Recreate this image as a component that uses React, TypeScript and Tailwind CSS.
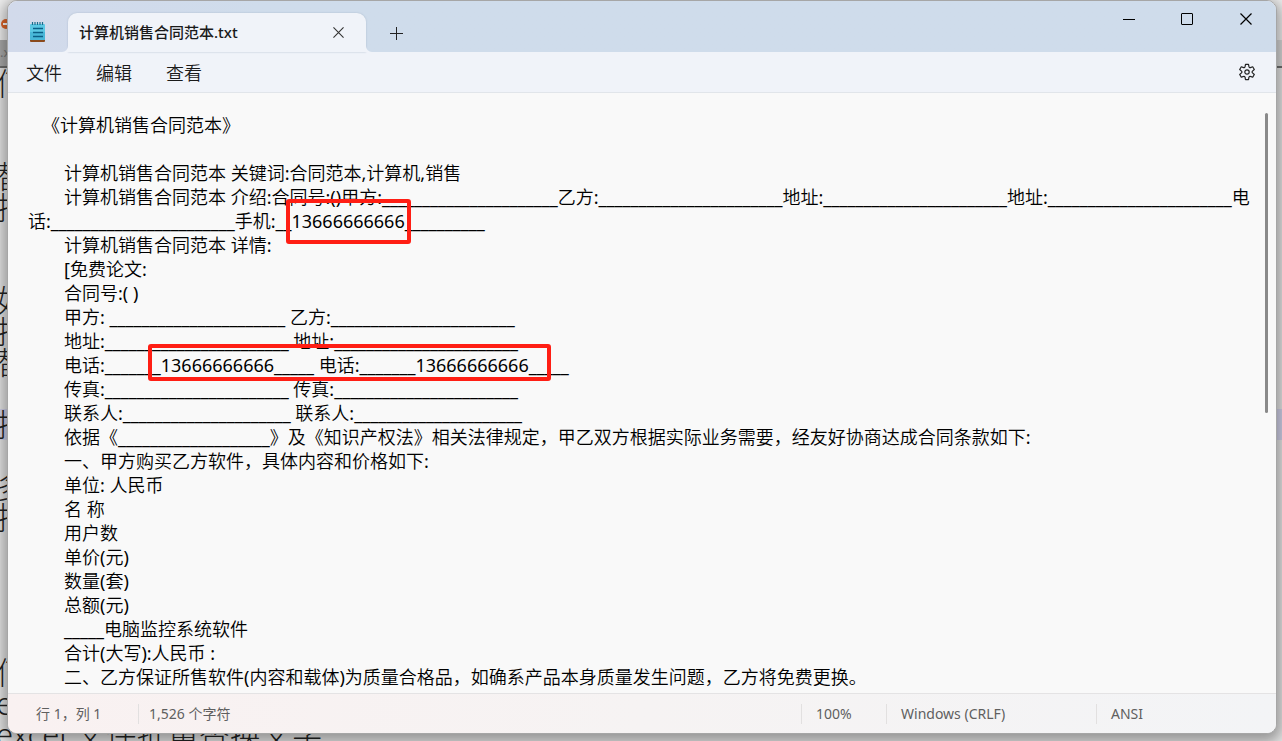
import React, { useState } from 'react';

const blank = (count: number) => '_'.repeat(count);

const DOCUMENT_TEXT = [
  '   《计算机销售合同范本》',
  '',
  '　　计算机销售合同范本 关键词:合同范本,计算机,销售',
  `　　计算机销售合同范本 介绍:合同号:()甲方:${blank(22)}乙方:${blank(23)}地址:${blank(23)}地址:${blank(23)}电话:${blank(23)}手机:${blank(2)}13666666666${blank(10)}`,
  '　　计算机销售合同范本 详情:',
  '　　[免费论文:',
  '　　合同号:( )',
  `　　甲方: ${blank(22)} 乙方:${blank(23)}`,
  `　　地址:${blank(23)} 地址:${blank(23)}`,
  `　　电话:${blank(7)}13666666666${blank(5)} 电话:${blank(7)}13666666666${blank(5)}`,
  `　　传真:${blank(23)} 传真:${blank(23)}`,
  `　　联系人:${blank(21)} 联系人:${blank(21)}`,
  `　　依据《${blank(19)}》及《知识产权法》相关法律规定，甲乙双方根据实际业务需要，经友好协商达成合同条款如下:`,
  '　　一、甲方购买乙方软件，具体内容和价格如下:',
  '　　单位: 人民币',
  '　　名 称',
  '　　用户数',
  '　　单价(元)',
  '　　数量(套)',
  '　　总额(元)',
  `　　${blank(5)}电脑监控系统软件`,
  '　　合计(大写):人民币 :',
  '　　二、乙方保证所售软件(内容和载体)为质量合格品，如确系产品本身质量发生问题，乙方将免费更换。',
].join('\n');

// Lines of the document that is open behind the window
const BACK_LINES = [
  '何', '', '', '替', '找', '', '', '如', '找', '替', '', '找', '', '多', '找',
  '', '', '', '', '何', 'e', 'excel 文件批量替换文字',
];

const MENUS = ['文件', '编辑', '查看'];

function NotepadIcon() {
  return (
    <svg width="16" height="21" viewBox="0 0 16 21" aria-hidden="true">
      <rect x="0" y="17" width="15" height="3" rx="1" fill="#8a4a1c" />
      <rect x="0" y="2" width="15" height="16" rx="1" fill="#5cc8e4" />
      <path d="M0 10h15v7a1 1 0 0 1-1 1H1a1 1 0 0 1-1-1z" fill="#48b7d8" />
      <path d="M2.5 0v3M5 0v3M7.5 0v3M10 0v3M12.5 0v3" stroke="#1b6d8c" strokeWidth="1.2" />
      <path d="M3 6.5h10M3 10.5h10M3 14.5h10" stroke="#0b5f86" strokeWidth="1.4" />
    </svg>
  );
}

function CloseIcon({ size, color }: { size: number; color: string }) {
  return (
    <svg width={size} height={size} viewBox="0 0 12 12" fill="none" stroke={color} strokeWidth="1.2" aria-hidden="true">
      <path d="M.5.5l11 11M11.5.5l-11 11" />
    </svg>
  );
}

function GearIcon() {
  return (
    <svg width="20" height="20" viewBox="0 0 20 20" fill="none" stroke="#222" strokeWidth="1.2" strokeLinejoin="round" aria-hidden="true">
      <path d="M8.5 1.4h3l.5 2.4a1 1 0 0 0 1.400.8l2.300-.8 1.600 2.700-1.800 1.600a1.200 1.200 0 0 0 0 1.800l1.800 1.600-1.600 2.700-2.300-.8a1 1 0 0 0-1.400.8l-.5 2.400h-3L8 14.200a1 1 0 0 0-1.400-.8l-2.300.8-1.600-2.700 1.800-1.600a1.200 1.200 0 0 0 0-1.800L2.700 6.500l1.600-2.700 2.300.8A1 1 0 0 0 8 3.800z" transform="translate(0 1)" />
      <circle cx="10" cy="10" r="2.2" />
    </svg>
  );
}

function Backdrop() {
  return (
    <div aria-hidden="true" className="absolute inset-0 flex flex-col overflow-hidden bg-[#e6e6e6]">
      <div className="h-[40px] shrink-0 bg-[#efefef] pt-[18px]">
        <svg width="12" height="12" viewBox="0 0 12 12">
          <circle cx="6" cy="6" r="5" fill="#e0662a" />
          <path d="M3 6h6" stroke="#fff" strokeWidth="2" />
        </svg>
      </div>
      <div className="flex h-[28px] shrink-0 items-center border-b-2 border-[#6f6f6f] bg-linear-to-r from-[#aaaaaa] to-[#d8d8d8] text-[13px] text-[#777]">
        .xls
      </div>
      <div className="-ml-1 shrink-0 font-light text-[31px] leading-[31px] text-[#222]">
        {BACK_LINES.map((line, i) => (
          <div key={i} className={i === 11 ? 'h-[31px] bg-[#d2d2ea]' : 'h-[31px]'}>
            {line}
          </div>
        ))}
      </div>
    </div>
  );
}

export default function App() {
  const [text, setText] = useState(DOCUMENT_TEXT);

  return (
    <div className="relative h-screen overflow-hidden pr-[5px] pb-[7px] pl-[7px] font-['Noto_Sans','Noto_Sans_CJK_SC',sans-serif]">
      <Backdrop />

      <div className="relative flex h-full flex-col overflow-hidden rounded-[10px] border border-[#a6a6a6] bg-[#f9f9f9] shadow-[0_4px_14px_4px_rgba(0,0,0,0.35)]">
        {/* Title bar */}
        <header className="flex h-[51px] shrink-0 items-start bg-linear-to-r from-[#d2daeb] to-[#cfdceb] to-20%">
          <div className="flex h-full w-[60px] items-center justify-center pt-3">
            <NotepadIcon />
          </div>
          <div className="relative mt-3 flex h-[39px] w-[298px] items-center justify-between rounded-t-[9px] bg-[#f0f3f9] pr-[21px] pl-[11px] shadow-[0_0_2px_#a9b8cb]">
            <span className="text-[15px] font-medium text-[#1a1a1a]">计算机销售合同范本.txt</span>
            <button type="button" aria-label="关闭选项卡" className="p-px">
              <CloseIcon size={11} color="#333" />
            </button>
            <svg width="6" height="6" className="absolute bottom-0 -left-[6px]" aria-hidden="true">
              <path d="M6 0v6H0a6 6 0 0 0 6-6z" fill="#f0f3f9" />
            </svg>
            <svg width="6" height="6" className="absolute -right-[6px] bottom-0" aria-hidden="true">
              <path d="M0 0v6h6a6 6 0 0 1-6-6z" fill="#f0f3f9" />
            </svg>
          </div>
          <button type="button" aria-label="新建选项卡" className="mt-3 flex h-10 w-[60px] items-center justify-center">
            <svg width="13" height="13" viewBox="0 0 13 13" stroke="#222" strokeWidth="1" aria-hidden="true">
              <path d="M6.5 0v13M0 6.5h13" />
            </svg>
          </button>
          <div className="ml-auto flex h-9">
            <button type="button" aria-label="最小化" className="flex w-[58px] items-center justify-center">
              <span className="h-px w-3 bg-black" />
            </button>
            <button type="button" aria-label="最大化" className="flex w-[58px] items-center justify-center">
              <span className="size-3 rounded-[1px] border border-black" />
            </button>
            <button type="button" aria-label="关闭" className="flex w-[60px] items-center justify-center">
              <CloseIcon size={12} color="#000" />
            </button>
          </div>
        </header>

        {/* Menu bar */}
        <nav className="flex h-[41px] shrink-0 items-center border-b border-[#e1e5ea] bg-[#f0f3f9] pr-[19px] pl-[18px]">
          <div className="flex gap-[34px] pt-0.5 text-lg font-[350] text-[#1a1a1a]">
            {MENUS.map((menu) => (
              <button key={menu} type="button">
                {menu}
              </button>
            ))}
          </div>
          <button type="button" aria-label="设置" className="ml-auto">
            <GearIcon />
          </button>
        </nav>

        {/* Editor */}
        <main className="relative flex min-h-0 flex-1">
          <textarea
            aria-label="文本编辑器"
            spellCheck={false}
            value={text}
            onChange={(e) => setText(e.target.value)}
            className="flex-1 resize-none overflow-hidden bg-transparent pt-5 pr-5 pl-5 font-['Noto_Sans','Noto_Sans_CJK_SC_DemiLight','Noto_Sans_CJK_SC',sans-serif] text-lg leading-6 text-black outline-none"
          />
          <div className="absolute top-5 right-2 h-1/2 w-[3px] rounded-full bg-[#8a8a8a]" />
          <div className="absolute top-[106px] left-[278px] h-[45px] w-[125px] rounded-[3px] border-4 border-[#ff1e14]" />
          <div className="absolute top-[251px] left-[140px] h-[37px] w-[403px] rounded-[3px] border-4 border-[#ff1e14]" />
        </main>

        {/* Status bar */}
        <footer className="flex h-10 shrink-0 items-center border-t border-[#e4e3e4] bg-linear-to-r from-[#f9f1f1] via-[#f6f3f3] to-[#f3f4f6] text-sm text-[#5f5f5f]">
          <span className="w-[130px] pl-7">行 1，列 1</span>
          <span className="flex-1 border-l border-[#e2e0e0] pl-[10px]">1,526 个字符</span>
          <span className="w-[85px] border-l border-[#e2e0e0] pl-[14px]">100%</span>
          <span className="w-[210px] border-l border-[#e2e0e0] pl-[14px]">Windows (CRLF)</span>
          <span className="w-[180px] border-l border-[#e2e0e0] pl-[14px]">ANSI</span>
        </footer>
      </div>
    </div>
  );
}
